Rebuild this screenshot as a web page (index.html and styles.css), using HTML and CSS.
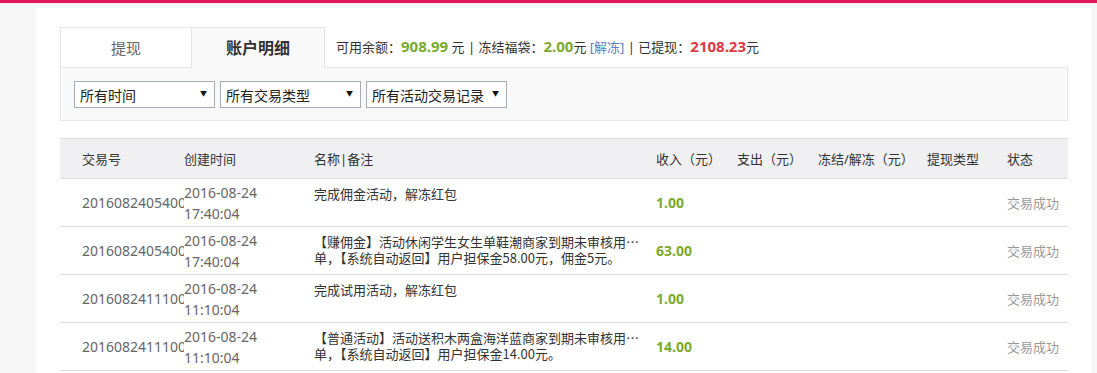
FILE: index.html
```html
<!doctype html>
<html lang="zh-CN">
<head>
    <meta charset="UTF-8">
    <title>账户明细</title>
    <link rel="stylesheet" href="styles.css">
</head>
<body>
<div class="top-bar"></div>
<div class="main">
    <!-- tabs + balance -->
    <div class="tabs">
        <a href="javascript:" class="tab">提现</a>
        <a href="javascript:" class="tab active">账户明细</a>
        <div class="balance">
            可用余额：<b class="green">908.99</b> 元 | 冻结福袋：<b class="green">2.00</b>元
            <a href="javascript:" class="unfreeze">[解冻]</a> | 已提现：<b class="red">2108.23</b>元
        </div>
    </div>
    <div class="filter">
        <label class="select">
            <select>
                <option>所有时间</option>
            </select>
        </label>
        <label class="select">
            <select>
                <option>所有交易类型</option>
            </select>
        </label>
        <label class="select">
            <select>
                <option>所有活动交易记录</option>
            </select>
        </label>
    </div>

    <table class="record">
        <colgroup>
            <col style="width:124px">
            <col style="width:130px">
            <col style="width:342px">
            <col style="width:81px">
            <col style="width:81px">
            <col style="width:109px">
            <col style="width:80px">
            <col style="width:61px">
        </colgroup>
        <thead>
        <tr>
            <th>交易号</th>
            <th>创建时间</th>
            <th>名称|备注</th>
            <th>收入（元）</th>
            <th>支出（元）</th>
            <th>冻结/解冻（元）</th>
            <th>提现类型</th>
            <th>状态</th>
        </tr>
        </thead>
        <tbody>
        <tr>
            <td class="no">2016082405400187</td>
            <td class="time">2016-08-24<br>17:40:04</td>
            <td><div class="name"><p>完成佣金活动，解冻红包</p></div></td>
            <td class="income">1.00</td>
            <td></td>
            <td></td>
            <td></td>
            <td class="status">交易成功</td>
        </tr>
        <tr>
            <td class="no">2016082405400152</td>
            <td class="time">2016-08-24<br>17:40:04</td>
            <td><div class="name"><p>【赚佣金】活动休闲学生女生单鞋潮商家到期未审核用户订单</p><p>单，【系统自动返回】用户担保金58.00元，佣金5元。</p></div></td>
            <td class="income">63.00</td>
            <td></td>
            <td></td>
            <td></td>
            <td class="status">交易成功</td>
        </tr>
        <tr>
            <td class="no">2016082411100364</td>
            <td class="time">2016-08-24<br>11:10:04</td>
            <td><div class="name"><p>完成试用活动，解冻红包</p></div></td>
            <td class="income">1.00</td>
            <td></td>
            <td></td>
            <td></td>
            <td class="status">交易成功</td>
        </tr>
        <tr>
            <td class="no">2016082411100318</td>
            <td class="time">2016-08-24<br>11:10:04</td>
            <td><div class="name"><p>【普通活动】活动送积木两盒海洋蓝商家到期未审核用户订单</p><p>单，【系统自动返回】用户担保金14.00元。</p></div></td>
            <td class="income">14.00</td>
            <td></td>
            <td></td>
            <td></td>
            <td class="status">交易成功</td>
        </tr>
        </tbody>
    </table>
</div>
</body>
</html>
```

FILE: styles.css
```css
* {
    margin: 0;
    padding: 0;
    box-sizing: border-box;
}

body {
    background: #f7f7f7;
    font-family: "Noto Sans", "Noto Sans CJK SC", sans-serif;
    font-size: 14px;
    color: #333;
}

a {
    text-decoration: none;
}

.top-bar {
    height: 3px;
    background: #e3155c;
    border-bottom: 1px solid #fbe6ec;
    box-sizing: content-box;
}

.main {
    width: 1055px;
    margin: 4px 0 0 36px;
    padding: 19px 23px 4px 24px;
    background: #fff;
}

.tabs {
    display: flex;
    height: 41px;
}

.tab {
    display: block;
    width: 132px;
    height: 41px;
    line-height: 40px;
    text-align: center;
    font-size: 15px;
    color: #666;
    background: #fff;
    border: 1px solid #e5e5e5;
}

.tab.active {
    width: 133px;
    border-left: none;
    border-bottom: none;
    background: #f9f9f9;
    color: #333;
    font-size: 16px;
    font-weight: 700;
}

.balance {
    flex: 1;
    padding-left: 11px;
    line-height: 38px;
    border-bottom: 1px solid #e5e5e5;
    font-size: 13px;
    color: #333;
}

.balance b {
    font-size: 15px;
}

.green {
    color: #7aab2f;
}

.red {
    color: #e2373f;
}

.unfreeze {
    color: #5b7fbd;
}

.filter {
    display: flex;
    gap: 5px;
    padding: 13px 13px 12px;
    background: #f9f9f9;
    border: 1px solid #e5e5e5;
    border-top: none;
}

.select {
    position: relative;
    display: block;
    width: 141px;
    height: 27px;
}

.select select {
    width: 100%;
    height: 100%;
    padding-left: 5px;
    border: 1px solid #a4aeb9;
    border-radius: 0;
    background: #fff;
    font-family: "Noto Sans CJK SC", sans-serif;
    font-size: 14px;
    color: #222;
    -webkit-appearance: none;
    appearance: none;
    outline: none;
}

.select::after {
    content: "▼";
    position: absolute;
    right: 8px;
    top: 9px;
    font-size: 7px;
    line-height: 8px;
    color: #111;
    pointer-events: none;
}

.record {
    width: 100%;
    margin-top: 17px;
    border-collapse: separate;
    border-spacing: 0;
    table-layout: fixed;
}

.record th {
    height: 41px;
    background: #f0f0f2;
    border-top: 1px solid #dcdcdc;
    border-bottom: 1px solid #dcdcdc;
    text-align: left;
    font-weight: 400;
    font-size: 13px;
    color: #333;
    white-space: nowrap;
}

.record th:first-child,
.record td:first-child {
    padding-left: 22px;
}

.record td {
    height: 48px;
    border-bottom: 1px solid #dcdcdc;
    vertical-align: middle;
}

.record .no {
    overflow: hidden;
    white-space: nowrap;
    color: #666;
    font-size: 14px;
}

.record .time {
    color: #666;
    font-size: 14px;
    line-height: 21px;
}

.name {
    width: 326px;
    height: 32px;
    margin-top: -2px;
    font-family: "Noto Sans CJK SC", sans-serif;
    font-size: 13px;
    line-height: 16px;
    color: #333;
}

.name p {
    overflow: hidden;
    white-space: nowrap;
    text-overflow: ellipsis;
}

.income {
    color: #7aab2f;
    font-weight: 700;
    font-size: 14px;
}

.status {
    color: #999;
    font-size: 13px;
    white-space: nowrap;
}
```
